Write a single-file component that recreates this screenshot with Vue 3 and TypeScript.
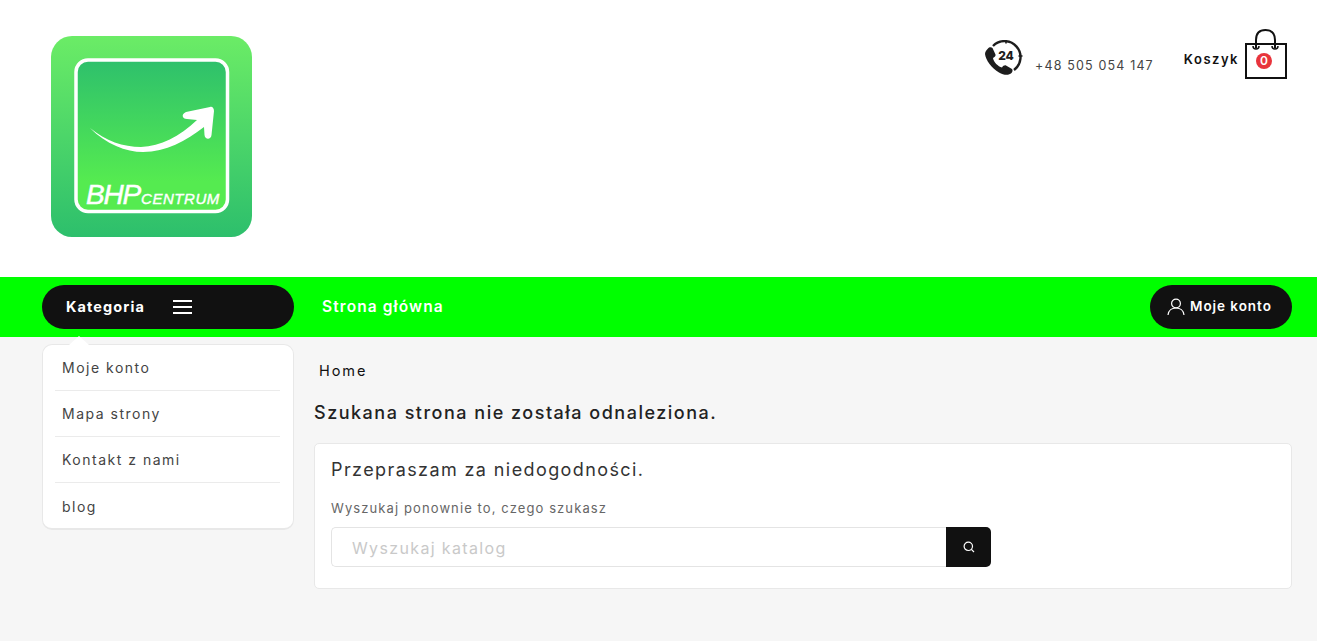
<template>
  <div class="strona">
    <header class="naglowek">
      <a class="logo" href="#">
        <svg width="201" height="201" viewBox="0 0 201 201">
          <defs>
            <linearGradient id="tloZew" x1="0" y1="0" x2="0" y2="1">
              <stop offset="0" stop-color="#6bec66" />
              <stop offset="1" stop-color="#2dbf6c" />
            </linearGradient>
            <linearGradient id="tloWew" x1="0" y1="0" x2="0" y2="1">
              <stop offset="0" stop-color="#2ec06c" />
              <stop offset="0.8" stop-color="#55eb50" />
              <stop offset="1" stop-color="#55eb50" />
            </linearGradient>
          </defs>
          <rect width="201" height="201" rx="21" fill="url(#tloZew)" />
          <rect x="25" y="24" width="151.5" height="151.5" rx="12" fill="url(#tloWew)" stroke="#fff" stroke-width="3.5" />
          <path d="M39 92 C55 108 75 116 92 116 C115 116 135 105 153 91 L153.5 99 C154 104 160 104 160.5 99 L163 75 C163 72 161 70 159 71 L135 76 C130 78 131 83 136 83 L146 84 C128 101 110 110 90 111 C72 111 55 105 39 92 Z" fill="#fff" />
          <text x="35" y="168" class="logo-bhp">BHP</text>
          <text x="90" y="168" class="logo-centrum">CENTRUM</text>
        </svg>
      </a>
      <div class="kontakt">
        <div class="telefon">
          <svg class="ikona-tel" width="40" height="36" viewBox="0 0 40 36">
            <path d="M8 6 A16 16 0 1 1 29 30" fill="none" stroke="#1d1d1d" stroke-width="2.4" />
            <path d="M21 0 V3.5 M37.5 16 H33.5" stroke="#1d1d1d" stroke-width="1.6" />
            <path d="M3 8.5 C4 7 6.5 7 7.5 8 L10.5 14.5 C11 16 9.5 17 8 18 C8.5 22 13 26.5 17 27.5 C18 26 19.5 25 21 25.5 L27 29 C28 30 27.5 32 26.5 33 C24 35.5 19 35.5 14 32.5 C7 28.5 0.5 20 0 14 C0 12 1.5 10 3 8.5 Z" fill="#1d1d1d" />
            <text x="21" y="20" class="tel-24">24</text>
          </svg>
          <span class="numer">+48 505 054 147</span>
        </div>
        <div class="koszyk">
          <span class="koszyk-tekst">Koszyk</span>
          <span class="torba">
            <svg width="44" height="52" viewBox="0 0 44 52">
              <path d="M2 16 H42 V50 H2 Z" fill="#fff" stroke="#111" stroke-width="2" />
              <path d="M12 20 V12 C12 5 16 2 21.5 2 C27 2 31 5 31 12 V20" fill="none" stroke="#111" stroke-width="2" />
              <path d="M9 18 C9 22 15 22 15 18 M28 18 C28 22 34 22 34 18" fill="none" stroke="#111" stroke-width="1.5" />
            </svg>
            <span class="licznik">0</span>
          </span>
        </div>
      </div>
    </header>

    <nav class="pasek">
      <div class="kategoria">
        <span>Kategoria</span>
        <span class="hamburger"><i></i><i></i><i></i></span>
      </div>
      <a class="link-glowna" href="#">Strona główna</a>
      <a class="konto" href="#">
        <svg width="18" height="18" viewBox="0 0 18 18" fill="none" stroke="#fff" stroke-width="1.2">
          <circle cx="9" cy="5.5" r="4.4" />
          <path d="M1 17 C1.5 12.5 5 10 9 10 C13 10 16.5 12.5 17 17" />
        </svg>
        <span>Moje konto</span>
      </a>
    </nav>

    <main class="tresc">
      <aside class="boczne">
        <span class="strzalka"></span>
        <ul>
          <li v-for="pozycja in menu" :key="pozycja"><a href="#">{{ pozycja }}</a></li>
        </ul>
      </aside>
      <section class="kolumna">
        <div class="okruszki">Home</div>
        <h1>Szukana strona nie została odnaleziona.</h1>
        <div class="karta">
          <h4>Przepraszam za niedogodności.</h4>
          <p>Wyszukaj ponownie to, czego szukasz</p>
          <form class="szukaj" @submit.prevent>
            <input type="text" placeholder="Wyszukaj katalog" />
            <button type="submit" aria-label="Szukaj">
              <svg width="12" height="12" viewBox="0 0 12 12" fill="none" stroke="#fff" stroke-width="1.2">
                <circle cx="5.3" cy="5.3" r="4.2" />
                <path d="M8.4 8.4 L11 11" />
              </svg>
            </button>
          </form>
        </div>
      </section>
    </main>
  </div>
</template>

<script setup lang="ts">
const menu: string[] = ["Moje konto", "Mapa strony", "Kontakt z nami", "blog"];
</script>

<style>
html,
body {
  margin: 0;
  background: #f6f6f6;
}
</style>

<style scoped>
.strona {
  min-height: 641px;
  background: #f6f6f6;
  font-family: Inter, "Liberation Sans", sans-serif;
  color: #222;
}

.naglowek {
  height: 277px;
  background: #fff;
  display: flex;
  justify-content: space-between;
  align-items: flex-start;
  padding: 0 29px 0 51px;
  box-sizing: border-box;
}

.logo {
  margin-top: 36px;
  display: block;
  height: 201px;
}

.logo-bhp {
  font-family: "Liberation Sans", sans-serif;
  font-style: italic;
  font-size: 28px;
  fill: #fff;
  stroke: #fff;
  stroke-width: 0.5px;
  letter-spacing: -1.2px;
}

.logo-centrum {
  font-family: "Liberation Sans", sans-serif;
  font-style: italic;
  font-size: 15px;
  fill: #fff;
  stroke: #fff;
  stroke-width: 0.4px;
  letter-spacing: 0.55px;
}

.kontakt {
  display: flex;
  align-items: flex-start;
  margin-top: 28px;
}

.telefon {
  display: flex;
  align-items: flex-start;
  margin-right: 30px;
  padding-top: 12px;
}

.ikona-tel {
  margin-right: 10px;
}

.tel-24 {
  font-family: Inter, sans-serif;
  font-size: 12px;
  font-weight: 800;
  fill: #1d1d1d;
  text-anchor: middle;
}

.numer {
  font-size: 12.5px;
  letter-spacing: 1.15px;
  color: #444;
  margin-top: 18px;
  line-height: 16px;
}

.koszyk {
  display: flex;
  align-items: flex-start;
}

.koszyk-tekst {
  font-size: 13px;
  font-weight: 600;
  letter-spacing: 1.5px;
  color: #111;
  margin-top: 22px;
  line-height: 18px;
  margin-right: 5px;
}

.torba {
  position: relative;
  display: block;
  width: 44px;
  height: 52px;
}

.licznik {
  position: absolute;
  left: 12px;
  top: 25px;
  width: 16px;
  height: 16px;
  border-radius: 50%;
  background: #e8343c;
  color: #fff;
  font-size: 12px;
  font-weight: 600;
  line-height: 16px;
  text-align: center;
}

.pasek {
  height: 60px;
  background: #00ff00;
  display: flex;
  align-items: center;
  padding: 0 25px 0 42px;
  box-sizing: border-box;
}

.kategoria {
  width: 252px;
  height: 44px;
  border-radius: 22px;
  background: #111;
  color: #fff;
  font-size: 14.5px;
  font-weight: 700;
  letter-spacing: 1.1px;
  display: flex;
  align-items: center;
  padding: 0 0 1px 24px;
  box-sizing: border-box;
}

.hamburger {
  display: flex;
  flex-direction: column;
  gap: 4px;
  margin: 1px 0 0 28px;
}

.hamburger i {
  display: block;
  width: 19px;
  height: 2px;
  background: #fff;
}

.link-glowna {
  margin: -1px 0 0 28px;
  color: #fff;
  text-decoration: none;
  font-size: 15.5px;
  font-weight: 600;
  letter-spacing: 1.1px;
}

.konto {
  margin-left: auto;
  width: 142px;
  height: 44px;
  border-radius: 22px;
  background: #111;
  color: #fff;
  text-decoration: none;
  font-size: 13.5px;
  font-weight: 600;
  letter-spacing: 0.95px;
  display: flex;
  align-items: center;
  gap: 5px;
  padding-left: 17px;
  box-sizing: border-box;
}

.konto span {
  margin-top: -3px;
}

.tresc {
  display: flex;
  gap: 20px;
  padding: 7px 25px 0 42px;
}

.boczne {
  position: relative;
  width: 252px;
  height: 186px;
  flex: none;
  box-sizing: border-box;
  background: #fff;
  border: 1px solid #e8e8e8;
  border-bottom-width: 2px;
  border-radius: 10px;
}

.strzalka {
  position: absolute;
  left: 26px;
  top: -9px;
  width: 0;
  height: 0;
  border-left: 10px solid transparent;
  border-right: 10px solid transparent;
  border-bottom: 9px solid #fff;
}

.boczne ul {
  list-style: none;
  margin: 0;
  padding: 0 13px 0 12px;
}

.boczne li {
  height: 46px;
  border-bottom: 1px solid #ebebeb;
  box-sizing: border-box;
  display: flex;
  align-items: center;
  padding: 0 7px;
  font-size: 14px;
  letter-spacing: 1.5px;
}

.boczne li:last-child {
  border-bottom: none;
}

.boczne a {
  color: #444;
  text-decoration: none;
}

.kolumna {
  flex: 1;
  min-width: 0;
}

.okruszki {
  padding: 18px 0 0 5px;
  font-size: 14.5px;
  letter-spacing: 1.95px;
  color: #111;
  line-height: 18px;
}

h1 {
  margin: 22px 0 0;
  font-size: 18px;
  font-weight: 500;
  letter-spacing: 1.5px;
  line-height: 22px;
  color: #222;
}

.karta {
  margin-top: 19px;
  height: 146px;
  box-sizing: border-box;
  background: #fff;
  border: 1px solid #e8e8e8;
  border-radius: 5px;
  padding: 16px;
}

h4 {
  margin: 0;
  font-size: 18px;
  font-weight: 400;
  letter-spacing: 1.4px;
  line-height: 20px;
  color: #333;
}

.karta p {
  margin: 19px 0 0;
  font-size: 13px;
  letter-spacing: 1.1px;
  line-height: 18px;
  color: #666;
}

.szukaj {
  display: flex;
  margin-top: 10px;
  width: 660px;
  height: 40px;
}

.szukaj input {
  flex: 1;
  min-width: 0;
  border: 1px solid #e4e4e4;
  border-right: none;
  border-radius: 5px 0 0 5px;
  padding: 1px 20px 0;
  font-family: inherit;
  font-size: 16px;
  letter-spacing: 1.35px;
  outline: none;
  background: #fff;
}

.szukaj input::placeholder {
  color: #c9c9c9;
}

.szukaj button {
  width: 45px;
  flex: none;
  border: none;
  background: #111;
  border-radius: 0 5px 5px 0;
  display: flex;
  align-items: center;
  justify-content: center;
  padding: 0;
}
</style>
